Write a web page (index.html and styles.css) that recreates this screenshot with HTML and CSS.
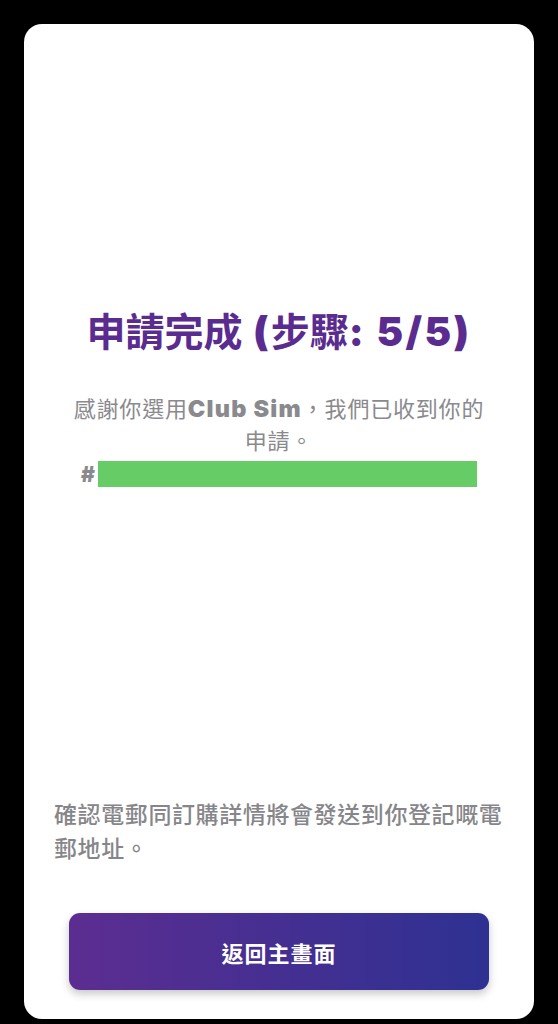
FILE: index.html
```html
<!DOCTYPE html>
<html lang="zh-Hant">
<head>
<meta charset="utf-8">
<link rel="stylesheet" href="styles.css">
</head>
<body>
<div class="card">
  <div class="top">
    <h1 class="title">申請完成<span class="lat"> (</span>步驟<span class="lat">: 5/5)</span></h1>
    <p class="thanks">感謝你選用<span class="brand">Club Sim</span><span class="punct">，</span>我們已收到你的申請<span class="punct">。</span></p>
    <div class="order"><span class="hash">#</span><span class="redact"></span></div>
  </div>
  <div class="bottom">
    <p class="note">確認電郵同訂購詳情將會發送到你登記嘅電郵地址<span class="punct">。</span></p>
    <button class="btn">返回主畫面</button>
  </div>
</div>
</body>
</html>
```
FILE: styles.css
```css
html, body {
  margin: 0;
  padding: 0;
  background: #000;
}
body {
  width: 558px;
  height: 1024px;
  font-family: "Noto Sans CJK TC", "Noto Sans", sans-serif;
}
.card {
  box-sizing: border-box;
  margin: 24px 24px 0 24px;
  width: 510px;
  height: 995px;
  background: #fff;
  border-radius: 18px;
  display: flex;
  flex-direction: column;
  padding: 281px 0 29px 0;
}
.top {
  display: flex;
  flex-direction: column;
  align-items: center;
}
.title {
  margin: 0;
  font-size: 39px;
  line-height: 48px;
  font-weight: 700;
  color: #5b2c8f;
  white-space: nowrap;
}
.lat {
  font-family: Inter, "Liberation Sans", sans-serif;
  font-weight: 900;
  font-size: 40px;
  letter-spacing: 2.4px;
}
.punct {
  font-family: "Noto Sans CJK SC", sans-serif;
}
.thanks {
  margin: 36px 0 0 0;
  width: 420px;
  text-align: center;
  font-size: 22px;
  line-height: 30px;
  color: #8a8a8e;
  letter-spacing: 0.8px;
}
.brand {
  font-family: Inter, "Liberation Sans", sans-serif;
  font-weight: 900;
  font-size: 23.5px;
  letter-spacing: 1.2px;
}
.order {
  margin-top: 7px;
  height: 26px;
  display: flex;
  align-items: center;
  gap: 3px;
}
.hash {
  font-family: Inter, "Liberation Sans", sans-serif;
  font-weight: 900;
  font-size: 21px;
  color: #8a8a8e;
}
.redact {
  width: 379px;
  height: 26px;
  background: #66cd66;
}
.bottom {
  margin-top: auto;
  display: flex;
  flex-direction: column;
  align-items: center;
}
.note {
  align-self: stretch;
  margin: 0;
  padding: 0 20px 0 30px;
  font-size: 23px;
  line-height: 34px;
  letter-spacing: 0.6px;
  font-weight: 500;
  color: #86868a;
}
.btn {
  margin-top: 49px;
  width: 420px;
  height: 77px;
  border: none;
  border-radius: 11px;
  background: linear-gradient(90deg, #5c2d91 0%, #2e3192 100%);
  box-shadow: 0 4px 8px rgba(0, 0, 0, 0.22);
  color: #fff;
  font-family: "Noto Sans CJK TC", sans-serif;
  font-size: 22px;
  font-weight: 700;
  letter-spacing: 1px;
}
```
